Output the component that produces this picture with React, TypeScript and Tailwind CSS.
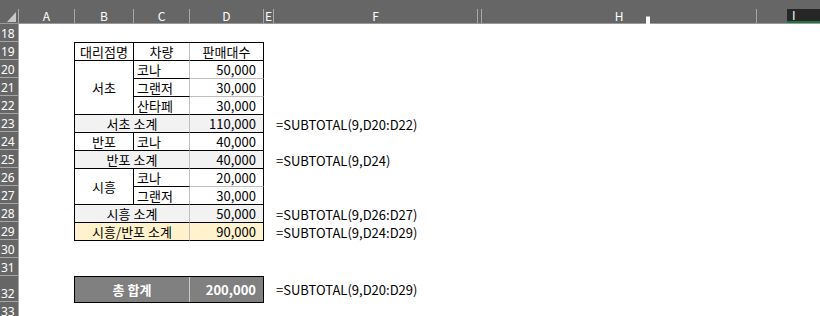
import React from "react";

const rows = [18, 19, 20, 21, 22, 23, 24, 25, 26, 27, 28, 29, 30, 31, 32, 33];

const formulas: Record<number, string> = {
  23: "=SUBTOTAL(9,D20:D22)",
  25: "=SUBTOTAL(9,D24)",
  28: "=SUBTOTAL(9,D26:D27)",
  29: "=SUBTOTAL(9,D24:D29)",
};

function Label({ text, className = "" }: { text: string; className?: string }) {
  return (
    <div className={`flex items-center justify-center border-r border-b border-black ${className}`}>
      {text}
    </div>
  );
}

function Car({ text }: { text: string }) {
  return (
    <div className="flex items-center pl-[3px] border-r border-r-[#bfbfbf] border-b border-b-black">
      {text}
    </div>
  );
}

function Num({ value, last = false, bg = "" }: { value: string; last?: boolean; bg?: string }) {
  return (
    <div className={`flex items-center justify-end pr-[7px] border-r border-r-black border-b ${last ? "border-b-black" : "border-b-[#bfbfbf]"} ${bg}`}>
      {value}
    </div>
  );
}

function SubTotal({ label, value, bg }: { label: string; value: string; bg: string }) {
  return (
    <>
      <div className={`col-span-2 flex items-center justify-center border-r border-r-[#bfbfbf] border-b border-b-black ${bg}`}>
        {label}
      </div>
      <Num value={value} last bg={bg} />
    </>
  );
}

export default function App() {
  return (
    <div className="w-[820px] h-[316px] overflow-hidden bg-white font-['Noto_Sans_CJK_KR','Noto_Sans',sans-serif] text-[13px] leading-none text-black">
      {/* column headers */}
      <div className="relative h-[24px] bg-[#666666] flex flex-col">
        <div className="h-[9px]" />
        <div className="flex h-[15px] border-b border-[#9a9a9a] text-white text-[12px]">
          <div className="w-[19px] border-r border-[#a6a6a6] relative">
            <svg width="18" height="14" className="absolute left-0 top-0">
              <polygon points="16,3 16,13 7,13" fill="#c8c8c8" />
            </svg>
          </div>
          <div className="w-[56px] border-r border-[#a6a6a6] flex items-center justify-center">A</div>
          <div className="w-[59px] border-r border-[#a6a6a6] flex items-center justify-center">B</div>
          <div className="w-[56px] border-r border-[#a6a6a6] flex items-center justify-center">C</div>
          <div className="w-[74px] border-r border-[#a6a6a6] flex items-center justify-center">D</div>
          <div className="w-[10px] border-r border-[#a6a6a6] flex items-center justify-center">E</div>
          <div className="w-[204px] border-r border-[#a6a6a6] flex items-center justify-center">F</div>
          <div className="w-[4px] border-r border-[#a6a6a6]" />
          <div className="w-[275px] border-r border-[#a6a6a6] flex items-center justify-center">H</div>
          <div className="w-[30px]" />
          <div className="flex-1 bg-[#262626] border-b-2 border-[#217346] flex items-center pl-[5px]">I</div>
        </div>
        <div className="absolute left-[646px] top-[16px] w-[4px] h-[9px] bg-white border-t border-[#b0b0b0]" />
      </div>

      <div className="flex">
        {/* row headers */}
        <div className="w-[19px] bg-[#666666] border-r border-[#a6a6a6] flex flex-col text-[12px] text-white font-['Noto_Sans',sans-serif]">
          {rows.map((r) => (
            <div
              key={r}
              className={`${r === 32 ? "h-[26px]" : "h-[18px]"} border-b border-[#a6a6a6] flex items-end pl-[1px] pb-[1px]`}
            >
              {r}
            </div>
          ))}
        </div>

        {/* sheet */}
        <div className="flex flex-col">
          <div className="h-[18px]" />
          <div className="flex">
            <div className="w-[55px]" />
            <div className="grid grid-cols-[59px_56px_74px] grid-rows-[repeat(11,18px)] border-l border-t border-black">
              <Label text="대리점명" />
              <div className="flex items-center justify-center border-r border-r-[#bfbfbf] border-b border-b-black">차량</div>
              <div className="flex items-center justify-center border-r border-b border-black">판매대수</div>

              <Label text="서초" className="row-span-3" />
              <Car text="코나" />
              <Num value="50,000" />
              <Car text="그랜저" />
              <Num value="30,000" />
              <Car text="산타페" />
              <Num value="30,000" last />
              <SubTotal label="서초 소계" value="110,000" bg="bg-[#f2f2f2]" />

              <Label text="반포" />
              <Car text="코나" />
              <Num value="40,000" last />
              <SubTotal label="반포 소계" value="40,000" bg="bg-[#f2f2f2]" />

              <Label text="시흥" className="row-span-2" />
              <Car text="코나" />
              <Num value="20,000" />
              <Car text="그랜저" />
              <Num value="30,000" last />
              <SubTotal label="시흥 소계" value="50,000" bg="bg-[#f2f2f2]" />
              <SubTotal label="시흥/반포 소계" value="90,000" bg="bg-[#fff2cc]" />
            </div>

            {/* formulas, column F */}
            <div className="flex flex-col pt-[1px] pl-[12px]">
              {[19, 20, 21, 22, 23, 24, 25, 26, 27, 28, 29].map((r) => (
                <div key={r} className="h-[18px] flex items-center">
                  {formulas[r] ?? ""}
                </div>
              ))}
            </div>
          </div>

          <div className="h-[35px]" />

          <div className="flex">
            <div className="w-[55px]" />
            <div className="w-[190px] h-[27px] bg-[#808080] border border-black flex text-white font-bold">
              <div className="w-[115px] border-r border-[#c8c8c8] flex items-center justify-center">총 합계</div>
              <div className="flex-1 flex items-center justify-end pr-[7px]">200,000</div>
            </div>
            <div className="pl-[12px] flex items-center">=SUBTOTAL(9,D20:D29)</div>
          </div>
        </div>
      </div>
    </div>
  );
}
